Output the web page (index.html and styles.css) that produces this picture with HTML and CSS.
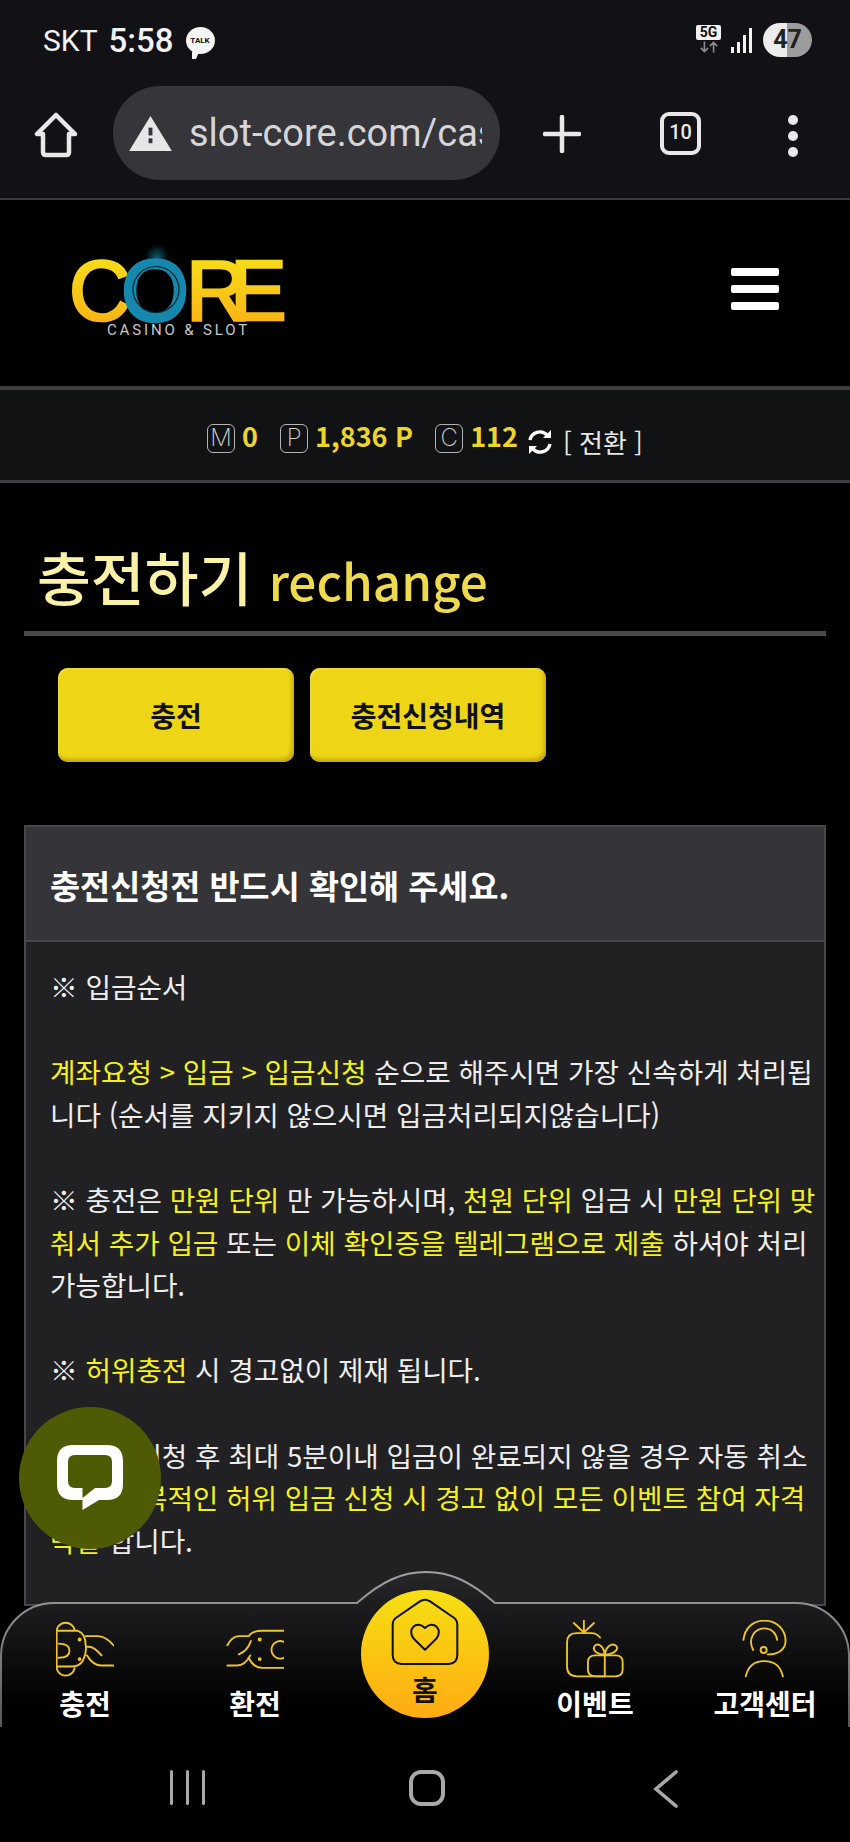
FILE: index.html
```html
<!DOCTYPE html>
<html lang="ko">

<head>
    <meta charset="UTF-8">
    <meta name="viewport" content="width=device-width, initial-scale=1.0">
    <title>충전하기 rechange</title>
    <link rel="stylesheet" href="styles.css">
</head>

<body>
    <div class="phone">
        <!-- status bar -->
        <div class="status-bar">
            <div class="status-left">
                <span class="carrier">SKT</span>
                <span class="clock">5:58</span>
                <span class="talk-badge">TALK</span>
            </div>
            <div class="status-right">
                <div class="net">
                    <span class="net-label">5G</span>
                    <svg class="net-arrows" viewBox="0 0 24 12" fill="none" stroke="#8c8c8c" stroke-width="1.8">
                        <path d="M7 0V11M3 7l4 4 4-4M17 12V1M13 5l4-4 4 4" />
                    </svg>
                </div>
                <svg class="signal" viewBox="0 0 22 25" fill="#f2f2f2">
                    <rect x="0" y="19" width="3" height="6" />
                    <rect x="6" y="14" width="3" height="11" />
                    <rect x="12" y="7" width="3" height="18" />
                    <rect x="18" y="0" width="3" height="25" />
                </svg>
                <span class="battery">47</span>
            </div>
        </div>

        <!-- browser toolbar -->
        <div class="toolbar">
            <svg class="tool-home" viewBox="0 0 44 46" fill="none" stroke="#e8e8ea" stroke-width="4.5" stroke-linejoin="round">
                <path d="M22 3L3 22H9V40Q9 43 12 43H32Q35 43 35 40V22H41Z" />
            </svg>
            <div class="url-bar">
                <svg class="warn" viewBox="0 0 44 36">
                    <path d="M22 0L44 36H0Z" fill="#e6e6e8" />
                    <rect x="20" y="12" width="4" height="8" fill="#35353a" />
                    <rect x="20" y="23" width="4" height="5" fill="#35353a" />
                </svg>
                <span class="url-text">slot-core.com/casino</span>
            </div>
            <svg class="tool-plus" viewBox="0 0 38 38" stroke="#e8e8ea" stroke-width="4.5" stroke-linecap="round">
                <path d="M19 2V36M2 19H36" />
            </svg>
            <span class="tab-count">10</span>
            <div class="tool-dots"><i></i><i></i><i></i></div>
        </div>

        <div class="viewport">
            <!-- site header -->
            <header class="site-header">
                <div class="logo">
                    <svg class="logo-word" viewBox="0 0 212 64">
                        <defs>
                            <linearGradient id="logoGold" x1="0" y1="0" x2="0" y2="1">
                                <stop offset="0" stop-color="#f5e61a" />
                                <stop offset="1" stop-color="#fbab14" />
                            </linearGradient>
                            <radialGradient id="logoGlow">
                                <stop offset="0" stop-color="#1a7f9c" stop-opacity="0.7" />
                                <stop offset="1" stop-color="#1a7f9c" stop-opacity="0" />
                            </radialGradient>
                        </defs>
                        <ellipse cx="85" cy="0" rx="12" ry="14" fill="url(#logoGlow)" />
                        <text class="logo-letters" y="62" x="-3 50 114 158" fill="url(#logoGold)" stroke="url(#logoGold)">C<tspan class="logo-o">O</tspan>RE</text>
                        <circle cx="84" cy="31.5" r="23" fill="none" stroke="#04252f" stroke-width="1.2" />
                    </svg>
                    <span class="logo-sub">CASINO &amp; SLOT</span>
                </div>
                <div class="hamburger"><i></i><i></i><i></i></div>
            </header>

            <!-- wallet -->
            <div class="wallet">
                <span class="wallet-mark">M</span><b class="wallet-num">0</b>
                <span class="wallet-mark mark-gap">P</span><b class="wallet-num">1,836 P</b>
                <span class="wallet-mark mark-gap">C</span><b class="wallet-num">112</b>
                <svg class="sync" viewBox="0 0 26 26" fill="none" stroke="#fff" stroke-width="3.4">
                    <path d="M3 11A10 10 0 0 1 20 6" />
                    <path d="M23 15A10 10 0 0 1 6 20" />
                    <path d="M24 1V9H16Z" fill="#fff" stroke="none" />
                    <path d="M2 25V17H10Z" fill="#fff" stroke="none" />
                </svg>
                <span class="wallet-swap">[ 전환 ]</span>
            </div>

            <main class="content">
                <h1 class="page-title">충전하기 <span>rechange</span></h1>

                <div class="tabs">
                    <button class="tab-btn">충전</button>
                    <button class="tab-btn">충전신청내역</button>
                </div>

                <section class="notice">
                    <h2 class="notice-head">충전신청전 반드시 확인해 주세요.</h2>
                    <div class="notice-body">
                        <p>※ 입금순서</p>
                        <p><em>계좌요청 &gt; 입금 &gt; 입금신청</em> 순으로 해주시면 가장 신속하게 처리됩니다 (순서를 지키지 않으시면 입금처리되지않습니다)</p>
                        <p>※ 충전은 <em>만원 단위</em> 만 가능하시며, <em>천원 단위</em> 입금 시 <em>만원 단위 맞춰서 추가 입금</em> 또는 <em>이체 확인증을 텔레그램으로 제출</em> 하셔야 처리 가능합니다.</p>
                        <p>※ <em>허위충전</em> 시 경고없이 제재 됩니다.</p>
                        <p>※ 입금신청 후 최대 5분이내 입금이 완료되지 않을 경우 자동 취소 되며, <em>반복적인 허위 입금 신청 시 경고 없이 모든 이벤트 참여 자격 박탈</em> 합니다.</p>
                    </div>
                </section>
            </main>

            <!-- floating chat -->
            <button class="chat-btn" aria-label="chat">
                <svg viewBox="0 0 66 66" fill="#fff">
                    <path fill-rule="evenodd" d="M16 0H50Q66 0 66 16V39Q66 55 50 55H42L25.5 65V55H16Q0 55 0 39V16Q0 0 16 0ZM18 10Q11 10 11 17V36Q11 43 18 43H25.5V53L38 43H48Q55 43 55 36V17Q55 10 48 10Z" />
                </svg>
            </button>

            <!-- bottom menu -->
            <nav class="bottom-nav">
                <svg class="nav-shape" viewBox="0 0 850 157">
                    <defs>
                        <linearGradient id="navFill" x1="0" y1="0" x2="0" y2="1">
                            <stop offset="0" stop-color="#27272a" />
                            <stop offset="0.85" stop-color="#000" />
                        </linearGradient>
                        <linearGradient id="navLine" x1="0" y1="0" x2="0" y2="1">
                            <stop offset="0" stop-color="#a0a0a0" />
                            <stop offset="0.6" stop-color="#777" />
                            <stop offset="1" stop-color="#555" />
                        </linearGradient>
                    </defs>
                    <path d="M1 157V86A53 53 0 0 1 54 33H357C382 11 402 2 426 2S470 11 495 33H796A53 53 0 0 1 849 86V157Z" fill="url(#navFill)" />
                    <path d="M1 157V86A53 53 0 0 1 54 33H357C382 11 402 2 426 2S470 11 495 33H796A53 53 0 0 1 849 86V157" fill="none" stroke="url(#navLine)" stroke-width="2" />
                </svg>

                <a class="nav-item">
                    <svg class="nav-icon" viewBox="170 120 172 172" fill="none" stroke="#f0c52c" stroke-width="5.5" stroke-linecap="round">
                        <path d="M225 150A27 27 0 0 0 172 150V263A27 27 0 0 0 225 263" />
                        <path d="M172 152H235Q258 160 258 195Q262 215 250 240Q240 258 215 258H172" />
                        <path d="M178 190Q210 190 210 211Q210 232 178 232" />
                        <path d="M258 168H295Q320 170 340 195M262 200Q280 195 305 225M262 225Q280 255 305 255H340" />
                        <circle cx="240" cy="178" r="3" fill="#f0c52c" />
                        <circle cx="240" cy="236" r="3" fill="#f0c52c" />
                    </svg>
                    <span class="nav-label">충전</span>
                </a>
                <a class="nav-item">
                    <svg class="nav-icon" viewBox="678 120 172 172" fill="none" stroke="#f0c52c" stroke-width="5.5" stroke-linecap="round">
                        <path d="M850 152H785Q755 152 745 168H715Q695 170 682 195" />
                        <path d="M716 222Q742 212 752 182" />
                        <path d="M682 255H710Q735 255 750 225" />
                        <path d="M850 262H785Q760 262 745 232" />
                        <path d="M850 185A26 26 0 1 0 850 232" />
                        <circle cx="778" cy="178" r="3" fill="#f0c52c" />
                        <circle cx="778" cy="236" r="3" fill="#f0c52c" />
                    </svg>
                    <span class="nav-label">환전</span>
                </a>
                <a class="nav-item nav-home">
                    <svg class="home-icon" viewBox="155 112 200 200" fill="none" stroke="#111" stroke-width="6" stroke-linejoin="round">
                        <path d="M240 122Q255 112 270 122L340 170Q350 177 350 190V280Q350 306 324 306H186Q160 306 160 280V190Q160 177 170 170Z" />
                        <path d="M255 264L222 232C200 205 230 175 255 200C280 175 310 205 288 232Z" />
                    </svg>
                    <span class="home-label">홈</span>
                </a>
                <a class="nav-item">
                    <svg class="nav-icon" viewBox="425 243 172 172" fill="none" stroke="#f0c52c" stroke-width="5.5" stroke-linecap="round">
                        <path d="M526 295Q516 282 500 282H456Q428 282 428 310V380Q428 410 458 410H540" />
                        <path d="M478 245V280M448 252L478 280M508 252L478 280" />
                        <path d="M512 348H572Q593 348 593 368V390Q593 410 572 410H512Q490 410 490 390V368Q490 348 512 348Z" />
                        <path d="M540 348V410" />
                        <path d="M540 346C520 346 505 335 508 324C512 310 535 312 540 346C545 312 572 310 576 324C579 335 560 346 540 346Z" />
                    </svg>
                    <span class="nav-label">이벤트</span>
                </a>
                <a class="nav-item">
                    <svg class="nav-icon" viewBox="936 243 172 172" fill="none" stroke="#f0c52c" stroke-width="5.5" stroke-linecap="round">
                        <path d="M958 302C962 268 985 245 1020 245C1058 245 1083 272 1083 305C1083 330 1060 346 1030 345" />
                        <path d="M987 332C970 300 990 268 1020 268C1042 268 1056 284 1058 302" />
                        <circle cx="1018" cy="332" r="9" />
                        <path d="M965 410Q975 365 1020 365Q1065 365 1075 410" />
                    </svg>
                    <span class="nav-label">고객센터</span>
                </a>
            </nav>
        </div>

        <!-- android buttons -->
        <div class="system-nav">
            <div class="sys-recent"><i></i><i></i><i></i></div>
            <div class="sys-home"></div>
            <svg class="sys-back" viewBox="0 0 25 38" fill="none" stroke="#a8a8a8" stroke-width="3.6" stroke-linecap="round">
                <path d="M23 2L3 19L23 36" />
            </svg>
        </div>
    </div>
</body>

</html>
```

FILE: styles.css
```css
* {
    box-sizing: border-box;
}

body {
    margin: 0;
    background-color: #000;
    font-family: "Noto Sans CJK KR", "Noto Sans", sans-serif;
    color: #eee;
}

.phone {
    width: 850px;
    height: 1842px;
    display: flex;
    flex-direction: column;
    overflow: hidden;
}

/* status bar */
.status-bar {
    height: 84px;
    padding: 20px 38px 0 43px;
    display: flex;
    justify-content: space-between;
    align-items: flex-start;
    background-color: #111116;
    font-family: Roboto, sans-serif;
    color: #f2f2f2;
}

.status-left {
    display: flex;
    align-items: center;
    height: 40px;
    gap: 11px;
}

.carrier {
    font-size: 30px;
}

.clock {
    font-size: 33px;
    font-weight: 500;
}

.talk-badge {
    position: relative;
    width: 29px;
    height: 27px;
    margin-left: 1px;
    border-radius: 50%;
    background-color: #f4f4f4;
    color: #111;
    font-size: 8px;
    font-weight: 700;
    line-height: 27px;
    text-align: center;
}

.talk-badge::after {
    content: "";
    position: absolute;
    left: 6px;
    bottom: -5px;
    border-left: 4px solid #f4f4f4;
    border-right: 3px solid transparent;
    border-top: 7px solid #f4f4f4;
}

.status-right {
    display: flex;
    align-items: flex-start;
    gap: 10px;
}

.net {
    width: 25px;
    margin-top: 5px;
}

.net-label {
    display: block;
    height: 15px;
    border-radius: 2px;
    background-color: #f2f2f2;
    color: #111;
    font-size: 14px;
    font-weight: 700;
    line-height: 15px;
    text-align: center;
}

.net-arrows {
    display: block;
    width: 22px;
    height: 12px;
    margin: 1px auto 0;
}

.signal {
    width: 22px;
    height: 25px;
    margin-top: 8px;
}

.battery {
    width: 49px;
    height: 34px;
    margin-top: 3px;
    border-radius: 17px;
    background: linear-gradient(90deg, #ececec 50%, #9c9c9c 50%);
    color: #222;
    font-size: 25px;
    font-weight: 700;
    line-height: 34px;
    text-align: center;
}

/* browser toolbar */
.toolbar {
    height: 116px;
    display: flex;
    align-items: flex-start;
    padding-top: 2px;
    background-color: #111116;
    border-bottom: 2px solid #3a3a3e;
}

.tool-home {
    width: 44px;
    height: 46px;
    margin: 26px 0 0 34px;
}

.url-bar {
    width: 387px;
    height: 94px;
    margin-left: 35px;
    padding: 0 18px 0 16px;
    display: flex;
    align-items: center;
    gap: 17px;
    border-radius: 47px;
    background-color: #35353a;
}

.warn {
    flex: none;
    width: 43px;
    height: 35px;
}

.url-text {
    flex: 1;
    overflow: hidden;
    white-space: nowrap;
    font-family: Roboto, sans-serif;
    font-size: 38px;
    color: #d6d6da;
}

.tool-plus {
    width: 38px;
    height: 38px;
    margin: 29px 0 0 43px;
}

.tab-count {
    width: 41px;
    height: 43px;
    margin: 26px 0 0 79px;
    border: 4.5px solid #e8e8ea;
    border-radius: 9px;
    color: #e8e8ea;
    font-family: Roboto, sans-serif;
    font-size: 20px;
    font-weight: 500;
    line-height: 33px;
    text-align: center;
}

.tool-dots {
    display: flex;
    flex-direction: column;
    gap: 6px;
    margin: 29px 0 0 87px;
}

.tool-dots i {
    width: 10px;
    height: 10px;
    border-radius: 50%;
    background-color: #e8e8ea;
}

.viewport {
    position: relative;
    flex: 1;
    overflow: hidden;
    background-color: #000;
}

/* site header */
.site-header {
    height: 190px;
    padding: 58px 71px 0 72px;
    display: flex;
    justify-content: space-between;
    border-bottom: 4px solid #3e3e42;
}

.logo {
    width: 212px;
}

.logo-word {
    display: block;
    width: 212px;
    height: 64px;
    overflow: visible;
}

.logo-letters {
    font-family: "Liberation Sans", sans-serif;
    font-size: 85px;
    stroke-width: 2.6;
}

.logo-o {
    fill: #1687ad;
    stroke: #1687ad;
    stroke-width: 4.5;
}

.logo-sub {
    display: block;
    width: 142px;
    margin: 1px 0 0 35px;
    font-family: Roboto, sans-serif;
    font-size: 15px;
    line-height: 15px;
    letter-spacing: 2.85px;
    color: #c8c8c8;
    white-space: nowrap;
}

.hamburger {
    display: flex;
    flex-direction: column;
    gap: 9px;
    margin-top: 10px;
}

.hamburger i {
    width: 48px;
    height: 8px;
    border-radius: 2px;
    background-color: #fff;
}

/* wallet */
.wallet {
    height: 93px;
    padding-top: 6px;
    display: flex;
    align-items: center;
    justify-content: center;
    background-color: #111214;
    border-bottom: 3px solid #3e3e42;
}

.wallet-mark {
    width: 28px;
    height: 29px;
    margin-right: 7px;
    border: 1.5px solid #b4b4b4;
    border-radius: 6px;
    color: #d0d0d0;
    font-family: Inter, sans-serif;
    font-size: 24px;
    font-weight: 200;
    line-height: 26px;
    text-align: center;
}

.mark-gap {
    margin-left: 22px;
}

.wallet-num {
    margin-top: -5px;
    color: #eed52a;
    font-size: 27px;
    font-weight: 700;
}

.sync {
    width: 26px;
    height: 26px;
    margin: 8px 10px 0 9px;
}

.wallet-swap {
    margin-top: 6px;
    font-size: 26px;
    color: #e8e8e8;
}

/* title */
.content {
    padding: 0 24px;
}

.page-title {
    height: 153px;
    margin: 0;
    padding: 52px 0 0 13px;
    border-bottom: 5px solid #4a4a4c;
    font-size: 58.5px;
    font-weight: 500;
    line-height: 82px;
    color: #fbf2a8;
}

.page-title span {
    font-size: 49.5px;
    color: #efd94c;
}

.tabs {
    display: flex;
    gap: 16px;
    padding: 32px 0 0 34px;
}

.tab-btn {
    width: 236px;
    height: 94px;
    padding: 0;
    border: none;
    border-radius: 10px;
    background-color: #eed617;
    box-shadow: inset -2px -3px 4px #c0a612, inset 1px 1px 2px #f6e550;
    color: #111;
    font-family: inherit;
    font-size: 28px;
    font-weight: 700;
}

/* notice panel */
.notice {
    margin-top: 63px;
    border: 2px solid #48484c;
    background-color: #212124;
}

.notice-head {
    height: 115px;
    margin: 0;
    padding: 2px 24px 0;
    background-color: #353539;
    border-bottom: 2px solid #48484c;
    font-size: 32.7px;
    font-weight: 700;
    line-height: 111px;
    color: #fff;
}

.notice-body {
    padding: 23px 5px 0 24px;
    font-size: 27.7px;
    line-height: 42.6px;
}

.notice-body p {
    margin: 0 0 42.6px;
}

.notice-body em {
    font-style: normal;
    color: #f6f01e;
}

/* chat button */
.chat-btn {
    position: absolute;
    left: 19px;
    top: 1207px;
    width: 142px;
    height: 142px;
    padding: 0;
    border: none;
    border-radius: 50%;
    background-color: #4f5a04;
    display: flex;
    align-items: center;
    justify-content: center;
}

.chat-btn svg {
    width: 66px;
    height: 66px;
}

/* bottom menu */
.bottom-nav {
    position: absolute;
    left: 0;
    bottom: 0;
    width: 850px;
    height: 157px;
    display: grid;
    grid-template-columns: repeat(5, 1fr);
}

.nav-shape {
    position: absolute;
    left: 0;
    top: 0;
    width: 850px;
    height: 157px;
}

.nav-item {
    position: relative;
    display: flex;
    flex-direction: column;
    align-items: center;
    padding-top: 50px;
}

.nav-icon {
    width: 58px;
    height: 58px;
}

.nav-label {
    margin-top: 5px;
    font-size: 28px;
    font-weight: 700;
    line-height: 40px;
    color: #fff;
    white-space: nowrap;
}

.nav-home {
    align-self: start;
    justify-self: center;
    width: 128px;
    height: 128px;
    margin-top: 20px;
    padding-top: 8px;
    border-radius: 50%;
    background: linear-gradient(#f6e012, #ffab12);
}

.home-icon {
    width: 68px;
    height: 68px;
}

.home-label {
    margin-top: 3px;
    font-size: 28px;
    font-weight: 700;
    line-height: 40px;
    color: #111;
}

/* android buttons */
.system-nav {
    position: relative;
    height: 115px;
    background-color: #000;
    display: flex;
    align-items: flex-start;
    padding-top: 43px;
}

.sys-recent {
    display: flex;
    gap: 13px;
    margin-left: 170px;
}

.sys-recent i {
    width: 3px;
    height: 35px;
    border-radius: 2px;
    background-color: #a8a8a8;
}

.sys-home {
    width: 36px;
    height: 36px;
    margin-left: 204px;
    border: 4px solid #a8a8a8;
    border-radius: 12px;
}

.sys-back {
    width: 25px;
    height: 38px;
    margin-left: 208px;
}
```
